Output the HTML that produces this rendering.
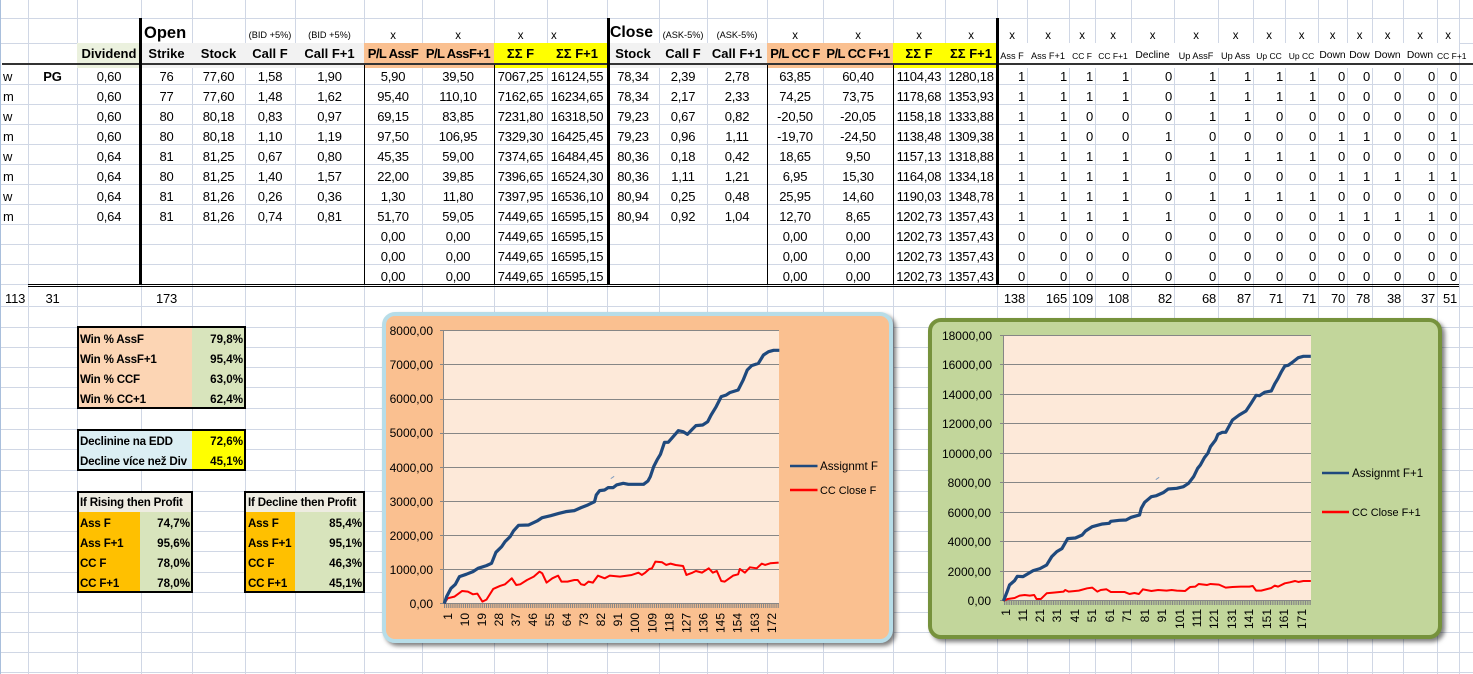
<!DOCTYPE html>
<html><head><meta charset="utf-8"><title>Sheet</title>
<style>
html,body{margin:0;padding:0;background:#fff}
#p{position:relative;width:1473px;height:674px;overflow:hidden;background:#fff;font-family:"Liberation Sans",sans-serif;color:#000}
svg{position:absolute;left:0;top:0}
table{position:absolute;left:1px;top:0;width:1472px;table-layout:fixed;border-collapse:separate;border-spacing:0;font-size:13px;letter-spacing:-.2px}
td{padding:0;line-height:18px;height:20px;text-align:center;vertical-align:top;white-space:nowrap}
td:first-child{text-align:left;padding-left:2px}
tr.d td:nth-child(n+19){text-align:right;padding-right:2px}
tr.h1 td{padding:0;vertical-align:bottom;line-height:14px;height:25px;font-size:11.5px}
tr.h2 td{padding:1px 0 0;line-height:19px;height:20px;font-weight:bold;letter-spacing:0}
tr.h2 td:nth-child(n+19){font-weight:normal;font-size:9.2px;background:#fff;line-height:24px}
tr.h2 td.a{font-size:10.3px!important}
tr.h2 td.c{font-size:8.5px!important}
tr.h2 .l{text-align:left;padding-left:2px}
.s{font-size:9.2px!important;letter-spacing:0;line-height:16px!important}
.big{font-weight:bold;font-size:16.5px!important;line-height:20px!important;text-align:left;padding-left:3px!important;letter-spacing:0}
.g{background:#f2f2f2}.o{background:#fac090;letter-spacing:-.55px!important}.y{background:#ffff00}.v{background:#ebf1de}
.box{position:absolute;border:2px solid #000;box-sizing:border-box;font-size:11.6px;font-weight:bold;letter-spacing:-.2px}
.box .t[style*="right"]{letter-spacing:0}
.f{position:absolute}
.t{position:absolute;white-space:nowrap;line-height:20px;height:20px;margin-top:1px}
.card{position:absolute;box-sizing:border-box;border-radius:13px}
</style></head><body><div id="p">

<svg width="1473" height="674" shape-rendering="crispEdges">
<g fill="#d0d7e5">
<rect x="28" y="0" width="1" height="674"/><rect x="77" y="0" width="1" height="674"/><rect x="141" y="0" width="1" height="674"/><rect x="192" y="0" width="1" height="674"/><rect x="245" y="0" width="1" height="674"/><rect x="295" y="0" width="1" height="674"/><rect x="364" y="0" width="1" height="674"/><rect x="422" y="0" width="1" height="674"/><rect x="494" y="0" width="1" height="674"/><rect x="547" y="0" width="1" height="674"/><rect x="607" y="0" width="1" height="674"/><rect x="659" y="0" width="1" height="674"/><rect x="707" y="0" width="1" height="674"/><rect x="767" y="0" width="1" height="674"/><rect x="823" y="0" width="1" height="674"/><rect x="893" y="0" width="1" height="674"/><rect x="945" y="0" width="1" height="674"/><rect x="997" y="0" width="1" height="674"/><rect x="1027" y="0" width="1" height="674"/><rect x="1069" y="0" width="1" height="674"/><rect x="1095" y="0" width="1" height="674"/><rect x="1131" y="0" width="1" height="674"/><rect x="1174" y="0" width="1" height="674"/><rect x="1218" y="0" width="1" height="674"/><rect x="1253" y="0" width="1" height="674"/><rect x="1285" y="0" width="1" height="674"/><rect x="1318" y="0" width="1" height="674"/><rect x="1347" y="0" width="1" height="674"/><rect x="1372" y="0" width="1" height="674"/><rect x="1403" y="0" width="1" height="674"/><rect x="1437" y="0" width="1" height="674"/><rect x="1459" y="0" width="1" height="674"/>
<rect x="0" y="18" width="1473" height="1"/>
<rect x="0" y="43" width="77" height="1"/><rect x="997" y="43" width="476" height="1"/>
<rect x="0" y="84" width="1473" height="1"/><rect x="0" y="104" width="1473" height="1"/><rect x="0" y="124" width="1473" height="1"/><rect x="0" y="144" width="1473" height="1"/><rect x="0" y="164" width="1473" height="1"/><rect x="0" y="184" width="1473" height="1"/><rect x="0" y="204" width="1473" height="1"/><rect x="0" y="224" width="1473" height="1"/><rect x="0" y="244" width="1473" height="1"/><rect x="0" y="264" width="1473" height="1"/><rect x="0" y="284" width="28" height="1"/><rect x="1459" y="284" width="14" height="1"/>
<rect x="0" y="306" width="1473" height="1"/><rect x="0" y="327" width="1473" height="1"/><rect x="0" y="347" width="1473" height="1"/><rect x="0" y="367" width="1473" height="1"/><rect x="0" y="387" width="1473" height="1"/><rect x="0" y="408" width="1473" height="1"/><rect x="0" y="429" width="1473" height="1"/><rect x="0" y="449" width="1473" height="1"/><rect x="0" y="470" width="1473" height="1"/><rect x="0" y="491" width="1473" height="1"/><rect x="0" y="511" width="1473" height="1"/><rect x="0" y="531" width="1473" height="1"/><rect x="0" y="551" width="1473" height="1"/><rect x="0" y="572" width="1473" height="1"/><rect x="0" y="592" width="1473" height="1"/><rect x="0" y="612" width="1473" height="1"/><rect x="0" y="632" width="1473" height="1"/><rect x="0" y="652" width="1473" height="1"/><rect x="0" y="672" width="1473" height="1"/>
</g>
<rect x="0" y="0" width="1" height="674" fill="#a9bfdc"/>
</svg>

<table>
<colgroup><col style="width:27px"><col style="width:49px"><col style="width:64px"><col style="width:51px"><col style="width:53px"><col style="width:50px"><col style="width:69px"><col style="width:58px"><col style="width:72px"><col style="width:53px"><col style="width:60px"><col style="width:52px"><col style="width:48px"><col style="width:60px"><col style="width:56px"><col style="width:70px"><col style="width:52px"><col style="width:52px"><col style="width:30px"><col style="width:42px"><col style="width:26px"><col style="width:36px"><col style="width:43px"><col style="width:44px"><col style="width:35px"><col style="width:32px"><col style="width:33px"><col style="width:29px"><col style="width:25px"><col style="width:31px"><col style="width:34px"><col style="width:22px"><col style="width:14px"></colgroup>
<tr style="height:18px"><td colspan="33" style="padding:0;height:18px"></td></tr>
<tr class="h1"><td></td><td></td><td></td><td class="big">Open</td><td></td><td class="s">(BID +5%)</td><td class="s">(BID +5%)</td><td>x</td><td>x</td><td>x</td><td style="text-align:left;padding-left:4px">x</td><td class="big" style="font-size:15.8px!important">Close</td><td class="s">(ASK-5%)</td><td class="s">(ASK-5%)</td><td>x</td><td>x</td><td>x</td><td>x</td><td>x</td><td>x</td><td>x</td><td>x</td><td>x</td><td>x</td><td>x</td><td>x</td><td>x</td><td>x</td><td>x</td><td>x</td><td>x</td><td>x</td><td></td></tr>
<tr class="h2"><td></td><td></td><td class="v">Dividend</td><td class="g">Strike</td><td class="g">Stock</td><td class="g">Call F</td><td class="g">Call F+1</td><td class="o">P/L AssF</td><td class="o">P/L AssF+1</td><td class="y">ΣΣ F</td><td class="y">ΣΣ F+1</td><td class="g">Stock</td><td class="g">Call F</td><td class="g">Call F+1</td><td class="o">P/L CC F</td><td class="o">P/L CC F+1</td><td class="y">ΣΣ F</td><td class="y">ΣΣ F+1</td><td>Ass F</td><td>Ass F+1</td><td class="c">CC F</td><td class="c">CC F+1</td><td class="a">Decline</td><td>Up AssF</td><td>Up Ass</td><td class="c">Up CC</td><td class="c">Up CC</td><td class="a">Down</td><td class="a">Dow</td><td class="a">Down</td><td class="a">Down</td><td class="l c" style="padding-left:0">CC F+1</td><td style="background:none"></td></tr>
<tr class="d"><td>w</td><td><b>PG</b></td><td>0,60</td><td>76</td><td>77,60</td><td>1,58</td><td>1,90</td><td>5,90</td><td>39,50</td><td>7067,25</td><td>16124,55</td><td>78,34</td><td>2,39</td><td>2,78</td><td>63,85</td><td>60,40</td><td>1104,43</td><td>1280,18</td><td>1</td><td>1</td><td>1</td><td>1</td><td>0</td><td>1</td><td>1</td><td>1</td><td>1</td><td>0</td><td>0</td><td>0</td><td>0</td><td>0</td><td></td></tr>
<tr class="d"><td>m</td><td></td><td>0,60</td><td>77</td><td>77,60</td><td>1,48</td><td>1,62</td><td>95,40</td><td>110,10</td><td>7162,65</td><td>16234,65</td><td>78,34</td><td>2,17</td><td>2,33</td><td>74,25</td><td>73,75</td><td>1178,68</td><td>1353,93</td><td>1</td><td>1</td><td>1</td><td>1</td><td>0</td><td>1</td><td>1</td><td>1</td><td>1</td><td>0</td><td>0</td><td>0</td><td>0</td><td>0</td><td></td></tr>
<tr class="d"><td>w</td><td></td><td>0,60</td><td>80</td><td>80,18</td><td>0,83</td><td>0,97</td><td>69,15</td><td>83,85</td><td>7231,80</td><td>16318,50</td><td>79,23</td><td>0,67</td><td>0,82</td><td>-20,50</td><td>-20,05</td><td>1158,18</td><td>1333,88</td><td>1</td><td>1</td><td>0</td><td>0</td><td>0</td><td>1</td><td>1</td><td>0</td><td>0</td><td>0</td><td>0</td><td>0</td><td>0</td><td>0</td><td></td></tr>
<tr class="d"><td>m</td><td></td><td>0,60</td><td>80</td><td>80,18</td><td>1,10</td><td>1,19</td><td>97,50</td><td>106,95</td><td>7329,30</td><td>16425,45</td><td>79,23</td><td>0,96</td><td>1,11</td><td>-19,70</td><td>-24,50</td><td>1138,48</td><td>1309,38</td><td>1</td><td>1</td><td>0</td><td>0</td><td>1</td><td>0</td><td>0</td><td>0</td><td>0</td><td>1</td><td>1</td><td>0</td><td>0</td><td>1</td><td></td></tr>
<tr class="d"><td>w</td><td></td><td>0,64</td><td>81</td><td>81,25</td><td>0,67</td><td>0,80</td><td>45,35</td><td>59,00</td><td>7374,65</td><td>16484,45</td><td>80,36</td><td>0,18</td><td>0,42</td><td>18,65</td><td>9,50</td><td>1157,13</td><td>1318,88</td><td>1</td><td>1</td><td>1</td><td>1</td><td>0</td><td>1</td><td>1</td><td>1</td><td>1</td><td>0</td><td>0</td><td>0</td><td>0</td><td>0</td><td></td></tr>
<tr class="d"><td>m</td><td></td><td>0,64</td><td>80</td><td>81,25</td><td>1,40</td><td>1,57</td><td>22,00</td><td>39,85</td><td>7396,65</td><td>16524,30</td><td>80,36</td><td>1,11</td><td>1,21</td><td>6,95</td><td>15,30</td><td>1164,08</td><td>1334,18</td><td>1</td><td>1</td><td>1</td><td>1</td><td>1</td><td>0</td><td>0</td><td>0</td><td>0</td><td>1</td><td>1</td><td>1</td><td>1</td><td>1</td><td></td></tr>
<tr class="d"><td>w</td><td></td><td>0,64</td><td>81</td><td>81,26</td><td>0,26</td><td>0,36</td><td>1,30</td><td>11,80</td><td>7397,95</td><td>16536,10</td><td>80,94</td><td>0,25</td><td>0,48</td><td>25,95</td><td>14,60</td><td>1190,03</td><td>1348,78</td><td>1</td><td>1</td><td>1</td><td>1</td><td>0</td><td>1</td><td>1</td><td>1</td><td>1</td><td>0</td><td>0</td><td>0</td><td>0</td><td>0</td><td></td></tr>
<tr class="d"><td>m</td><td></td><td>0,64</td><td>81</td><td>81,26</td><td>0,74</td><td>0,81</td><td>51,70</td><td>59,05</td><td>7449,65</td><td>16595,15</td><td>80,94</td><td>0,92</td><td>1,04</td><td>12,70</td><td>8,65</td><td>1202,73</td><td>1357,43</td><td>1</td><td>1</td><td>1</td><td>1</td><td>1</td><td>0</td><td>0</td><td>0</td><td>0</td><td>1</td><td>1</td><td>1</td><td>1</td><td>0</td><td></td></tr>
<tr class="d"><td></td><td></td><td></td><td></td><td></td><td></td><td></td><td>0,00</td><td>0,00</td><td>7449,65</td><td>16595,15</td><td></td><td></td><td></td><td>0,00</td><td>0,00</td><td>1202,73</td><td>1357,43</td><td>0</td><td>0</td><td>0</td><td>0</td><td>0</td><td>0</td><td>0</td><td>0</td><td>0</td><td>0</td><td>0</td><td>0</td><td>0</td><td>0</td><td></td></tr>
<tr class="d"><td></td><td></td><td></td><td></td><td></td><td></td><td></td><td>0,00</td><td>0,00</td><td>7449,65</td><td>16595,15</td><td></td><td></td><td></td><td>0,00</td><td>0,00</td><td>1202,73</td><td>1357,43</td><td>0</td><td>0</td><td>0</td><td>0</td><td>0</td><td>0</td><td>0</td><td>0</td><td>0</td><td>0</td><td>0</td><td>0</td><td>0</td><td>0</td><td></td></tr>
<tr class="d"><td></td><td></td><td></td><td></td><td></td><td></td><td></td><td>0,00</td><td>0,00</td><td>7449,65</td><td>16595,15</td><td></td><td></td><td></td><td>0,00</td><td>0,00</td><td>1202,73</td><td>1357,43</td><td>0</td><td>0</td><td>0</td><td>0</td><td>0</td><td>0</td><td>0</td><td>0</td><td>0</td><td>0</td><td>0</td><td>0</td><td>0</td><td>0</td><td></td></tr>
<tr style="height:2px"><td colspan="33" style="padding:0;height:2px;line-height:0;font-size:0"></td></tr>
<tr class="d"><td style="padding-left:4px">113</td><td>31</td><td></td><td>173</td><td></td><td></td><td></td><td></td><td></td><td></td><td></td><td></td><td></td><td></td><td></td><td></td><td></td><td></td><td>138</td><td>165</td><td>109</td><td>108</td><td>82</td><td>68</td><td>87</td><td>71</td><td>71</td><td>70</td><td>78</td><td>38</td><td>37</td><td>51</td><td></td></tr>
</table>

<svg width="1473" height="674" shape-rendering="crispEdges">
<g fill="#000">
<rect x="2" y="63" width="1471" height="2" fill="#333"/>
<rect x="139" y="18" width="3" height="267"/>
<rect x="607" y="18" width="3" height="267"/>
<rect x="996" y="18" width="3" height="267"/>
<rect x="364" y="65" width="1" height="220"/>
<rect x="494" y="65" width="1" height="220"/>
<rect x="767" y="65" width="1" height="220"/>
<rect x="893" y="65" width="1" height="220"/>
<rect x="28" y="284" width="1431" height="1"/>
<rect x="28" y="286" width="1431" height="1"/>
</g>
</svg>

<!-- Box 1 -->
<div class="box" style="left:77px;top:326px;width:169px;height:83px;background:#fcd5b4">
<div class="f" style="left:113px;top:0;width:52px;height:79px;background:#d8e4bc"></div>
<div class="t" style="left:1px;top:1px">Win % AssF</div><div class="t" style="right:1px;top:1px">79,8%</div>
<div class="t" style="left:1px;top:21px">Win % AssF+1</div><div class="t" style="right:1px;top:21px">95,4%</div>
<div class="t" style="left:1px;top:41px">Win % CCF</div><div class="t" style="right:1px;top:41px">63,0%</div>
<div class="t" style="left:1px;top:61px">Win % CC+1</div><div class="t" style="right:1px;top:61px">62,4%</div>
</div>
<!-- Box 2 -->
<div class="box" style="left:77px;top:429px;width:169px;height:42px;background:#dbeef3">
<div class="f" style="left:113px;top:0;width:52px;height:38px;background:#ffff00"></div>
<div class="t" style="left:1px;top:0">Declinine na EDD</div><div class="t" style="right:1px;top:0">72,6%</div>
<div class="t" style="left:1px;top:20px">Decline více než Div</div><div class="t" style="right:1px;top:20px">45,1%</div>
</div>
<!-- Box 3 -->
<div class="box" style="left:77px;top:491px;width:116px;height:102px;background:#eeece1">
<div class="f" style="left:0;top:19px;width:61px;height:79px;background:#ffc000"></div>
<div class="f" style="left:61px;top:19px;width:51px;height:79px;background:#d8e4bc"></div>
<div class="t" style="left:1px;top:-1px">If Rising then Profit</div>
<div class="t" style="left:1px;top:20px">Ass F</div><div class="t" style="right:1px;top:20px">74,7%</div>
<div class="t" style="left:1px;top:40px">Ass F+1</div><div class="t" style="right:1px;top:40px">95,6%</div>
<div class="t" style="left:1px;top:60px">CC F</div><div class="t" style="right:1px;top:60px">78,0%</div>
<div class="t" style="left:1px;top:80px">CC F+1</div><div class="t" style="right:1px;top:80px">78,0%</div>
</div>
<!-- Box 4 -->
<div class="box" style="left:244px;top:491px;width:121px;height:102px;background:#eeece1">
<div class="f" style="left:0;top:19px;width:49px;height:79px;background:#ffc000"></div>
<div class="f" style="left:49px;top:19px;width:68px;height:79px;background:#d8e4bc"></div>
<div class="t" style="left:2px;top:-1px">If Decline then Profit</div>
<div class="t" style="left:2px;top:20px">Ass F</div><div class="t" style="right:1px;top:20px">85,4%</div>
<div class="t" style="left:2px;top:40px">Ass F+1</div><div class="t" style="right:1px;top:40px">95,1%</div>
<div class="t" style="left:2px;top:60px">CC F</div><div class="t" style="right:1px;top:60px">46,3%</div>
<div class="t" style="left:2px;top:80px">CC F+1</div><div class="t" style="right:1px;top:80px">45,1%</div>
</div>

<!-- Chart cards -->
<div class="card" style="left:382px;top:312px;width:511px;height:331px;background:#fac090;border:4px solid #b7dde8;box-shadow:3px 3px 4px rgba(0,0,0,.5)"></div>
<div class="card" style="left:928px;top:318px;width:514px;height:321px;background:#c2d69b;border:4px solid #76923c;box-shadow:3px 3px 4px rgba(0,0,0,.5)"></div>

<svg width="1473" height="674" font-family="'Liberation Sans',sans-serif" font-size="12" fill="#000">
<!-- Chart 1 -->
<rect x="444" y="330" width="335" height="274" fill="#fde9d9"/>
<g stroke="#868686" stroke-width="1" shape-rendering="crispEdges">
<path d="M440 330.5H779M440 364.5H779M440 399.5H779M440 433.5H779M440 467.5H779M440 501.5H779M440 535.5H779M440 569.5H779M440 603.5H779M443.5 330V604"/>
</g>
<path d="M444 606H779" stroke="#868686" stroke-width="4" stroke-dasharray="1 .91" fill="none"/>
<g text-anchor="end">
<text x="433" y="335">8000,00</text><text x="433" y="369">7000,00</text><text x="433" y="403">6000,00</text><text x="433" y="437">5000,00</text><text x="433" y="472">4000,00</text><text x="433" y="506">3000,00</text><text x="433" y="540">2000,00</text><text x="433" y="574">1000,00</text><text x="433" y="608">0,00</text>
</g>
<g text-anchor="end">
<text transform="translate(452,613) rotate(-90)">1</text><text transform="translate(469,613) rotate(-90)">10</text><text transform="translate(486,613) rotate(-90)">19</text><text transform="translate(503,613) rotate(-90)">28</text><text transform="translate(520,613) rotate(-90)">37</text><text transform="translate(537,613) rotate(-90)">46</text><text transform="translate(554,613) rotate(-90)">55</text><text transform="translate(571,613) rotate(-90)">64</text><text transform="translate(588,613) rotate(-90)">73</text><text transform="translate(605,613) rotate(-90)">82</text><text transform="translate(622,613) rotate(-90)">91</text><text transform="translate(639,613) rotate(-90)">100</text><text transform="translate(656.5,613) rotate(-90)">109</text><text transform="translate(673.5,613) rotate(-90)">118</text><text transform="translate(690.5,613) rotate(-90)">127</text><text transform="translate(707.5,613) rotate(-90)">136</text><text transform="translate(724.5,613) rotate(-90)">145</text><text transform="translate(741.5,613) rotate(-90)">154</text><text transform="translate(759,613) rotate(-90)">163</text><text transform="translate(776,613) rotate(-90)">172</text>
</g>
<g transform="translate(375 305) scale(.3378 .3333)" fill="none" stroke-linejoin="round">
<polyline vector-effect="non-scaling-stroke" stroke="#ff0000" stroke-width="2" points="205,896 215,880 235,875 258,858 275,860 290,868 303,866 318,890 330,884 350,852 370,843 385,838 405,820 418,840 430,838 450,825 470,815 487,800 495,805 508,833 525,820 542,812 552,830 570,830 590,825 600,825 610,838 620,840 632,830 645,833 660,812 680,820 695,812 725,815 760,810 780,803 790,810 800,803 812,792 820,790 830,770 850,772 862,780 875,776 890,780 912,783 922,810 940,803 950,798 968,803 988,790 1000,803 1012,798 1025,828 1035,830 1060,812 1075,808 1080,792 1095,803 1110,787 1130,790 1145,776 1155,780 1170,775 1195,773"/>
<polyline vector-effect="non-scaling-stroke" stroke="#1f497d" stroke-width="3.2" points="205,896 212,875 225,850 238,838 250,815 270,808 290,800 305,790 330,782 345,775 358,742 375,725 385,710 400,695 410,678 425,661 455,660 480,648 495,638 520,632 545,625 565,620 590,617 610,608 630,600 650,590 655,570 665,557 680,555 690,548 705,548 715,540 735,535 750,538 795,538 808,528 815,515 825,485 835,465 845,448 857,412 868,412 880,398 898,377 912,380 925,388 940,372 950,362 970,360 985,350 995,330 1010,305 1025,275 1040,270 1050,263 1075,255 1090,225 1102,195 1115,182 1135,175 1150,150 1165,140 1180,136 1197,136"/>
<path vector-effect="non-scaling-stroke" d="M698 521L708 514" stroke="#7f9dc0" stroke-width="1"/>
</g>
<path d="M790 466H817.5" stroke="#1f497d" stroke-width="2.5"/>
<path d="M790 490H817.5" stroke="#ff0000" stroke-width="2.5"/>
<text x="820" y="470" font-size="11.6">Assignmt F</text>
<text x="820" y="494" font-size="10.9">CC Close F</text>

<!-- Chart 2 -->
<rect x="1004" y="335" width="307" height="266" fill="#fde9d9"/>
<g stroke="#868686" stroke-width="1" shape-rendering="crispEdges">
<path d="M1000 335.5H1311M1000 364.5H1311M1000 394.5H1311M1000 423.5H1311M1000 453.5H1311M1000 482.5H1311M1000 512.5H1311M1000 541.5H1311M1000 571.5H1311M1000 600.5H1311M1003.5 335V601"/>
</g>
<path d="M1004 603H1311" stroke="#868686" stroke-width="4" stroke-dasharray="1 .75" fill="none"/>
<g text-anchor="end">
<text x="992" y="340">18000,00</text><text x="992" y="369">16000,00</text><text x="992" y="399">14000,00</text><text x="992" y="428">12000,00</text><text x="992" y="458">10000,00</text><text x="991" y="487">8000,00</text><text x="991" y="517">6000,00</text><text x="991" y="546">4000,00</text><text x="991" y="576">2000,00</text><text x="991" y="605">0,00</text>
</g>
<g text-anchor="end">
<text transform="translate(1010,609) rotate(-90)">1</text><text transform="translate(1027,609) rotate(-90)">11</text><text transform="translate(1044,609) rotate(-90)">21</text><text transform="translate(1061,609) rotate(-90)">31</text><text transform="translate(1079,609) rotate(-90)">41</text><text transform="translate(1096,609) rotate(-90)">51</text><text transform="translate(1114,609) rotate(-90)">61</text><text transform="translate(1131,609) rotate(-90)">71</text><text transform="translate(1149,609) rotate(-90)">81</text><text transform="translate(1166,609) rotate(-90)">91</text><text transform="translate(1184,609) rotate(-90)">101</text><text transform="translate(1201,609) rotate(-90)">111</text><text transform="translate(1218,609) rotate(-90)">121</text><text transform="translate(1236,609) rotate(-90)">131</text><text transform="translate(1253,609) rotate(-90)">141</text><text transform="translate(1271,609) rotate(-90)">151</text><text transform="translate(1288,609) rotate(-90)">161</text><text transform="translate(1306,609) rotate(-90)">171</text>
</g>
<g transform="translate(920 310) scale(.3378 .3333)" fill="none" stroke-linejoin="round">
<polyline vector-effect="non-scaling-stroke" stroke="#ff0000" stroke-width="2" points="247,873 260,867 280,864 295,857 310,855 325,857 338,855 345,867 358,867 375,850 395,848 425,845 430,840 440,845 470,842 495,835 510,833 525,845 535,840 552,838 565,846 605,846 620,852 635,849 648,852 660,838 685,843 705,840 730,842 745,840 760,842 785,843 800,831 815,830 825,822 850,825 860,822 885,824 905,833 925,831 950,830 975,830 985,828 995,842 1010,842 1040,834 1050,827 1060,830 1080,820 1095,817 1110,813 1120,816 1135,813 1157,813"/>
<polyline vector-effect="non-scaling-stroke" stroke="#1f497d" stroke-width="3.2" points="247,873 258,845 265,825 280,812 288,799 305,800 335,782 355,776 375,765 390,740 405,725 420,716 437,686 460,684 480,675 490,663 510,650 540,642 560,640 565,634 590,631 610,630 625,622 650,615 655,595 665,577 685,560 700,557 720,548 735,537 760,535 780,530 795,520 810,500 822,475 830,465 842,443 852,430 860,410 875,390 882,373 895,367 905,367 925,330 945,315 965,303 980,280 995,256 1005,257 1020,247 1040,243 1050,222 1060,205 1070,185 1080,168 1090,166 1105,155 1120,143 1135,139 1157,139"/>
<path vector-effect="non-scaling-stroke" d="M698 509L708 502" stroke="#7f9dc0" stroke-width="1"/>
</g>
<path d="M1322 473H1349" stroke="#1f497d" stroke-width="2.5"/>
<path d="M1322 512H1349" stroke="#ff0000" stroke-width="2.5"/>
<text x="1352" y="477" font-size="11.6">Assignmt F+1</text>
<text x="1352" y="516" font-size="10.9">CC Close F+1</text>
</svg>

</div></body></html>
